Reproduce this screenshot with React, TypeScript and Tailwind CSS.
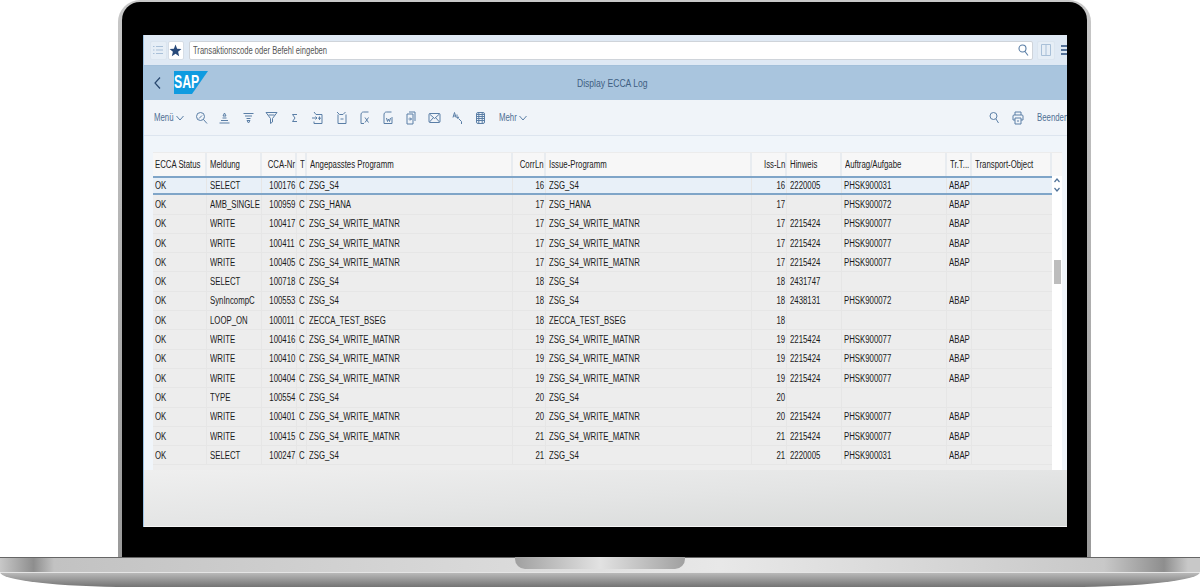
const FONT = "font-['Liberation_Sans',Arial,sans-serif]";

// the reference text is a squeezed Arial, so every label goes through this
function T({ children, right, squeeze = 'scale-x-[.78]', className = '' }: { children?: React.ReactNode; right?: boolean; squeeze?: string; className?: string }) {
  return (
    <span className={`inline-block whitespace-nowrap ${squeeze} ${right ? 'origin-right' : 'origin-left'} ${className}`}>
      {children}
    </span>
  );
}

const stroke = { fill: 'none', stroke: '#5a7ea6', strokeWidth: 1 };

function Ico({ children, w = 13, h = 14 }: { children: React.ReactNode; w?: number; h?: number }) {
  return (
    <svg width={w} height={h} viewBox="0 0 13 14" {...stroke} className="shrink-0">
      {children}
    </svg>
  );
}

const toolIcons = [
  <Ico key="zoom"><circle cx="5.5" cy="5.5" r="4" /><path d="M8.5 8.5L12 12.5M4 7.500l3-3" /></Ico>,
  <Ico key="asc"><path d="M6.5 2L8 5H5zM4.500 7h4M3 9.500h7M1.500 12h10" /></Ico>,
  <Ico key="desc"><path d="M1.500 2.500h10M3 5h7M4.500 7.500h4M6.500 12L8 9.500H5z" /></Ico>,
  <Ico key="filter"><path d="M1 1.500h11L7.500 7.500v3.500l-2 1.500V7.500zM3.500 4h6" /></Ico>,
  <Ico key="sum"><path d="M9 3.500H4.500l2.500 3.500-2.500 3.500H9" /></Ico>,
  <Ico key="addrow"><path d="M3 1l2 2.500h6v9H3v-2M1 7h5M4.500 5.500L6 7l-1.500 1.500M8.500 5.500v3.500M7 7.200h3" /></Ico>,
  <Ico key="delrow"><path d="M2 1l2.500 2.500H8l2.500-2.500M11 3.500v9H3v-9M5.500 8h3" /></Ico>,
  <Ico key="xls"><path d="M10.500 1H5.500C3.500 1 3 2.500 3 4v8.500h3M7 6.500l3.500 5M10.500 6.500L7 11.500" /></Ico>,
  <Ico key="word"><path d="M10.500 1H5.500C3.500 1 3 2.500 3 4v8.500h8V6M5.500 7l1 3.500 1-2.500 1 2.500 1-3.500" /></Ico>,
  <Ico key="docarrow"><path d="M5 1h6v9M3 3h6v10H3zM4.500 8h3M6 6.500L7.500 8 6 9.500" /></Ico>,
  <Ico key="mail"><rect x="1" y="2.500" width="11" height="9" rx="1" /><path d="M1.500 3l5 4.500 5-4.500M1.500 11l4-4.500M11.500 11l-4-4.500" /></Ico>,
  <Ico key="abc"><path d="M2 6.500l1.500-5 1.500 5M2.500 5h2M6 3.500v3.500h2M6 7l2-1M8 8l2.500 2.500v2.500" /></Ico>,
  <Ico key="table"><rect x="2.500" y="1.500" width="8" height="11" rx="1.500" /><path d="M2.500 3.500h8M2.500 5.500h8M2.500 7.500h8M2.500 9.500h8M4.800 1.500v11M8.200 1.500v11" /></Ico>,
];

const columns = ['ECCA Status', 'Meldung', 'CCA-Nr', 'T', 'Angepasstes Programm', 'CorrLn', 'Issue-Programm', 'Iss-Ln', 'Hinweis', 'Auftrag/Aufgabe', 'Tr.T...', 'Transport-Object'];
const rightCols = [2, 5, 7];
const gridCols = 'grid-cols-[54px_55px_35px_10px_206px_33px_206px_35px_55px_105px_25px_80px]';

const W = 'ZSG_S4_WRITE_MATNR';
const rows: string[][] = [
  ['AMB_SINGLE', '100959', 'ZSG_HANA', '17', 'ZSG_HANA', '17', '', 'PHSK900072'],
  ['WRITE', '100417', W, '17', W, '17', '2215424', 'PHSK900077'],
  ['WRITE', '100411', W, '17', W, '17', '2215424', 'PHSK900077'],
  ['WRITE', '100405', W, '17', W, '17', '2215424', 'PHSK900077'],
  ['SELECT', '100718', 'ZSG_S4', '18', 'ZSG_S4', '18', '2431747', ''],
  ['SynIncompC', '100553', 'ZSG_S4', '18', 'ZSG_S4', '18', '2438131', 'PHSK900072'],
  ['LOOP_ON', '100011', 'ZECCA_TEST_BSEG', '18', 'ZECCA_TEST_BSEG', '18', '', ''],
  ['WRITE', '100416', W, '19', W, '19', '2215424', 'PHSK900077'],
  ['WRITE', '100410', W, '19', W, '19', '2215424', 'PHSK900077'],
  ['WRITE', '100404', W, '19', W, '19', '2215424', 'PHSK900077'],
  ['TYPE', '100554', 'ZSG_S4', '20', 'ZSG_S4', '20', '', ''],
  ['WRITE', '100401', W, '20', W, '20', '2215424', 'PHSK900077'],
  ['WRITE', '100415', W, '21', W, '21', '2215424', 'PHSK900077'],
  ['SELECT', '100247', 'ZSG_S4', '21', 'ZSG_S4', '21', '2220005', 'PHSK900031'],
];

function cellPad(i: number) {
  if (rightCols.includes(i)) return 'justify-end pr-[1px]';
  if (i === 1 || i === 6 || i === 8) return 'pl-[3px]';
  return 'pl-[2px]';
}

function Row({ r, selected }: { r: string[]; selected?: boolean }) {
  const [msg, nr, prog, corr, issue, iss, note, order] = r;
  const cells = ['OK', msg, nr, 'C', prog, corr, issue, iss, note, order, order ? 'ABAP' : '', ''];
  return (
    <div className={`grid ${gridCols} h-[19.300px] items-center text-[10px] text-[#1a1a1a] ${selected ? 'bg-[#e8f0f8] border-y-2 border-[#7fa5c8]' : 'bg-[#ededed] border-b border-[#e6e6e6]'}`}>
      {cells.map((c, i) => (
        <div key={i} className={`h-full flex items-center ${i < 11 ? 'border-r border-[#e6e6e6]' : ''} ${cellPad(i)}`}>
          <T right={rightCols.includes(i)}>{c}</T>
        </div>
      ))}
    </div>
  );
}

export default function App() {
  return (
    <div className={`w-[1200px] h-[587px] overflow-hidden bg-white flex flex-col ${FONT}`}>
      {/* lid */}
      <div className="ml-[118px] w-[973px] h-[557px] rounded-t-[22px] bg-gradient-to-b from-[#c8c8c8] to-[#9a9a9a] pt-[2px] px-[4px] shrink-0">
        <div className="h-full rounded-t-[18px] bg-black pt-[33px] px-[21px]">
          {/* screen */}
          <div className="w-[924px] h-[492px] flex flex-col overflow-hidden bg-[#f0f5fa] border-l border-[#9cc3e6]">
            {/* search bar */}
            <div className="h-[30px] shrink-0 bg-[#dfe9f4] flex items-center pl-[6px] gap-[1px]">
              <div className="w-[17px] h-[19px] bg-[#e6eef6] border border-[#dbe5ef] rounded-[2px] flex items-center justify-center">
                <svg width="10" height="10" viewBox="0 0 10 10" fill="none" stroke="#a9c0d8" strokeWidth="1"><path d="M0 1.500h1.500M3 1.500h7M0 5h1.500M3 5h7M0 8.500h1.500M3 8.500h7" /></svg>
              </div>
              <div className="w-[17px] h-[19px] bg-white border border-[#d5dde6] rounded-[2px] flex items-center justify-center">
                <svg width="13" height="13" viewBox="0 0 12 12" fill="#27497a"><path d="M6 .5l1.500 3.800 4 .3-3.100 2.600 1 4L6 9l-3.400 2.200 1-4L.5 4.600l4-.3z" /></svg>
              </div>
              <div className="ml-[4px] w-[844px] h-[19px] bg-white border border-[#cfd4da] rounded-[2px] flex items-center justify-between pl-[3px] pr-[3px] text-[10px] text-[#555] shrink-0">
                <T squeeze="scale-x-[.76]">Transaktionscode oder Befehl eingeben</T>
                <svg width="11" height="12" viewBox="0 0 11 12" fill="none" stroke="#5a7ea6" strokeWidth="1.100"><circle cx="4.500" cy="4.500" r="3.500" /><path d="M7 7.500l3 4" /></svg>
              </div>
              <div className="ml-[3px] w-[18px] h-[19px] shrink-0 bg-[#e6eef6] border border-[#dbe5ef] rounded-[2px] flex items-center justify-center">
                <svg width="10" height="12" viewBox="0 0 10 12" fill="none" stroke="#a9c0d8"><path d="M.5.500h9v11h-9zM5 .5v11" /></svg>
              </div>
              <svg width="6" height="10" viewBox="0 0 6 10" stroke="#27497a" strokeWidth="1.300" className="ml-[5px] shrink-0"><path d="M0 1h6M0 5h6M0 9h6" /></svg>
            </div>
            {/* shell header */}
            <div className="h-[35px] shrink-0 bg-[#a9c5de] flex items-center pl-[10px] border-t border-[#a3c0da]">
              <svg width="8" height="12" viewBox="0 0 8 12" fill="none" stroke="#28486e" strokeWidth="1.200"><path d="M6 .5L1 6l5 5.500" /></svg>
              <div className="ml-[12px] mt-[-1px] w-[34px] h-[23px] bg-[#0f9be0] [clip-path:polygon(0_0,100%_0,53%_100%,0_100%)] flex items-start pt-[2px] text-[18px] font-bold text-white leading-none">
                <T squeeze="scale-x-[.68]">SAP</T>
              </div>
              <div className="flex-1 text-center text-[11px] text-[#3f5f82] pr-[50px]">
                <T className="origin-center!">Display ECCA Log</T>
              </div>
            </div>
            {/* toolbar */}
            <div className="h-[36px] shrink-0 bg-[#f0f4f9] border-b border-[#dde5ef] flex items-center pl-[10px] text-[10px] text-[#4f6f94]">
              <div className="w-[29px] flex items-center">
                <T>Menü</T>
              </div>
              <svg width="8" height="6" viewBox="0 0 8 6" fill="none" stroke="#5a7ea6" className="-ml-[7px]"><path d="M.5 1L4 5l3.500-4" /></svg>
              <div className="flex items-center gap-[10.250px] ml-[11px]">{toolIcons}</div>
              <div className="w-[24px] ml-[12px]"><T>Mehr</T></div>
              <svg width="8" height="6" viewBox="0 0 8 6" fill="none" stroke="#5a7ea6" className="-ml-[4px]"><path d="M.5 1L4 5l3.500-4" /></svg>
              <div className="ml-auto flex items-center">
                <svg width="10" height="13" viewBox="0 0 10 13" fill="none" stroke="#5a7ea6"><circle cx="4.500" cy="5" r="3.500" /><path d="M7 8l2.500 4" /></svg>
                <svg width="12" height="14" viewBox="0 0 12 14" fill="none" stroke="#5a7ea6" className="ml-[13px]"><path d="M3 4V1h6v3M1 9V5q0-1 1-1h8q1 0 1 1v4H9M3 9H1M3 7h6v6H3zM5 10h2" /></svg>
                <div className="w-[30px] ml-[13px] text-[#4f6f94]"><T>Beenden</T></div>
              </div>
            </div>
            {/* table */}
            <div className="mt-[16px] ml-[9px] w-[909px] flex-1 flex flex-col min-h-0">
              <div className="flex h-[24px] shrink-0">
                <div className={`grid ${gridCols} w-[899px] h-full text-[10px] text-[#222] bg-[#f7f7f7] border-t border-[#ececec]`}>
                  {columns.map((c, i) => (
                    <div key={c} className={`flex items-center border-r-2 border-[#e8ecf0] ${rightCols.includes(i) ? 'justify-end' : i === 0 ? 'pl-[2px]' : 'pl-[3px]'}`}>
                      <T right={rightCols.includes(i)}>{c}</T>
                    </div>
                  ))}
                </div>
                <div className="w-[10px] bg-[#f7f7f7] border-t border-[#ececec]" />
              </div>
              <div className="flex flex-1 min-h-0">
                <div className="w-[899px] overflow-hidden">
                  <Row selected r={['SELECT', '100176', 'ZSG_S4', '16', 'ZSG_S4', '16', '2220005', 'PHSK900031']} />
                  {rows.map((r, i) => <Row key={i} r={r} />)}
                  <div className="h-[6px] bg-[#ededed]" />
                </div>
                {/* scrollbar */}
                <div className="relative w-[10px] bg-white flex flex-col items-center pt-[2px] gap-[4px]">
                  <svg width="6" height="5" viewBox="0 0 6 5" fill="none" stroke="#4f7299" strokeWidth="1.200"><path d="M.5 4L3 1l2.500 3" /></svg>
                  <svg width="6" height="5" viewBox="0 0 6 5" fill="none" stroke="#4f7299" strokeWidth="1.200"><path d="M.5 1L3 4l2.500-3" /></svg>
                  <div className="absolute top-[84px] left-[2px] w-[7px] h-[24px] bg-[#bdbdbd]" />
                </div>
              </div>
            </div>
            {/* gloss below the table */}
            <div className="h-[57px] shrink-0 -mx-px bg-gradient-to-br from-[#efefef] via-[#e4e5e5] to-[#d6d8d7] border-b border-[#f5f5f5]" />
          </div>
        </div>
      </div>
      {/* base */}
      <div className="relative h-[30px] shrink-0 rounded-b-[130px_15px] overflow-hidden bg-white">
        <div className="h-[15px] bg-[linear-gradient(90deg,#c8c8c8_0,#8e8e8e_2.800%,#c2c2c2_4.500%,#dcdcdc_45%,#e8e8e8_60%,#c8c8c8_92%,#8e8e8e_97%,#c8c8c8_99%)] border-t border-[#666]" />
        <div className="h-[15px] bg-gradient-to-b from-[#b9b9b9] to-[#747474] border-t border-[#e5e5e5]" />
        <div className="absolute top-0 left-[515px] w-[170px] h-[12px] rounded-b-[10px] bg-[linear-gradient(90deg,#a0a0a0,#e2e2e2_50%,#a0a0a0)]" />
      </div>
    </div>
  );
}
